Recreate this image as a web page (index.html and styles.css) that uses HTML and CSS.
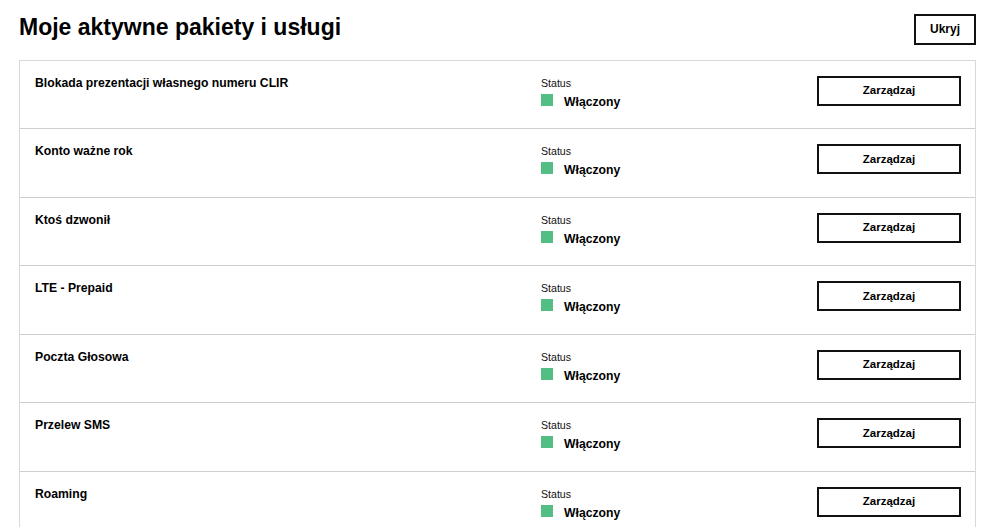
FILE: index.html
```html
<!DOCTYPE html>
<html lang="pl">
<head>
<meta charset="utf-8">
<link rel="stylesheet" href="styles.css">
</head>
<body>
<div class="page">
  <div class="header">
    <h1 class="title">Moje aktywne pakiety i usługi</h1>
    <button class="btn btn-hide">Ukryj</button>
  </div>
  <div class="list">
    <div class="row">
      <div class="name">Blokada prezentacji własnego numeru CLIR</div>
      <div class="status"><div class="status-label">Status</div><div class="status-value"><span class="dot"></span>Włączony</div></div>
      <button class="btn btn-manage">Zarządzaj</button>
    </div>
    <div class="row">
      <div class="name">Konto ważne rok</div>
      <div class="status"><div class="status-label">Status</div><div class="status-value"><span class="dot"></span>Włączony</div></div>
      <button class="btn btn-manage">Zarządzaj</button>
    </div>
    <div class="row">
      <div class="name">Ktoś dzwonił</div>
      <div class="status"><div class="status-label">Status</div><div class="status-value"><span class="dot"></span>Włączony</div></div>
      <button class="btn btn-manage">Zarządzaj</button>
    </div>
    <div class="row">
      <div class="name">LTE - Prepaid</div>
      <div class="status"><div class="status-label">Status</div><div class="status-value"><span class="dot"></span>Włączony</div></div>
      <button class="btn btn-manage">Zarządzaj</button>
    </div>
    <div class="row">
      <div class="name">Poczta Głosowa</div>
      <div class="status"><div class="status-label">Status</div><div class="status-value"><span class="dot"></span>Włączony</div></div>
      <button class="btn btn-manage">Zarządzaj</button>
    </div>
    <div class="row">
      <div class="name">Przelew SMS</div>
      <div class="status"><div class="status-label">Status</div><div class="status-value"><span class="dot"></span>Włączony</div></div>
      <button class="btn btn-manage">Zarządzaj</button>
    </div>
    <div class="row">
      <div class="name">Roaming</div>
      <div class="status"><div class="status-label">Status</div><div class="status-value"><span class="dot"></span>Włączony</div></div>
      <button class="btn btn-manage">Zarządzaj</button>
    </div>
  </div>
</div>
</body>
</html>
```
FILE: styles.css
```css
* { box-sizing: border-box; }
html, body { margin: 0; padding: 0; background: #fff; }
body {
  font-family: "Liberation Sans", Arial, sans-serif;
  color: #000;
  overflow: hidden;
}
.page {
  padding: 0 23px 0 19px;
}
.header {
  display: flex;
  justify-content: space-between;
  align-items: flex-start;
  height: 59.5px;
  padding-top: 14px;
}
.title {
  margin: 0;
  font-size: 23px;
  line-height: 27px;
  font-weight: bold;
}
.btn {
  font-family: "Liberation Sans", Arial, sans-serif;
  font-weight: bold;
  font-size: 11.5px;
  color: #000;
  background: #fff;
  border: 2px solid #111;
  padding: 0 0 1px;
  cursor: pointer;
}
.btn-hide {
  margin-top: 0;
  width: 62px;
  height: 31px;
  font-size: 12px;
}
.list {
  border: 1px solid #d9d9d9;
  border-bottom: none;
}
.row {
  display: grid;
  grid-template-columns: 1fr 276px 144px;
  align-items: start;
  height: 68.5px;
  padding: 0 14px 0 15px;
  border-bottom: 1px solid #cfcfcf;
}
.name {
  padding-top: 15px;
  font-size: 12.2px;
  line-height: 15px;
  font-weight: bold;
}
.status {
  padding-top: 16px;
}
.status-label {
  font-size: 10.6px;
  line-height: 13px;
  color: #111;
}
.status-value {
  display: flex;
  align-items: flex-start;
  margin-top: 3px;
  font-size: 12.2px;
  line-height: 18px;
  font-weight: bold;
}
.dot {
  width: 12px;
  height: 12px;
  margin-top: 1px;
  margin-right: 11px;
  background: #52be84;
  flex: none;
}
.btn-manage {
  margin-top: 15px;
  width: 144px;
  height: 30px;
}
```
